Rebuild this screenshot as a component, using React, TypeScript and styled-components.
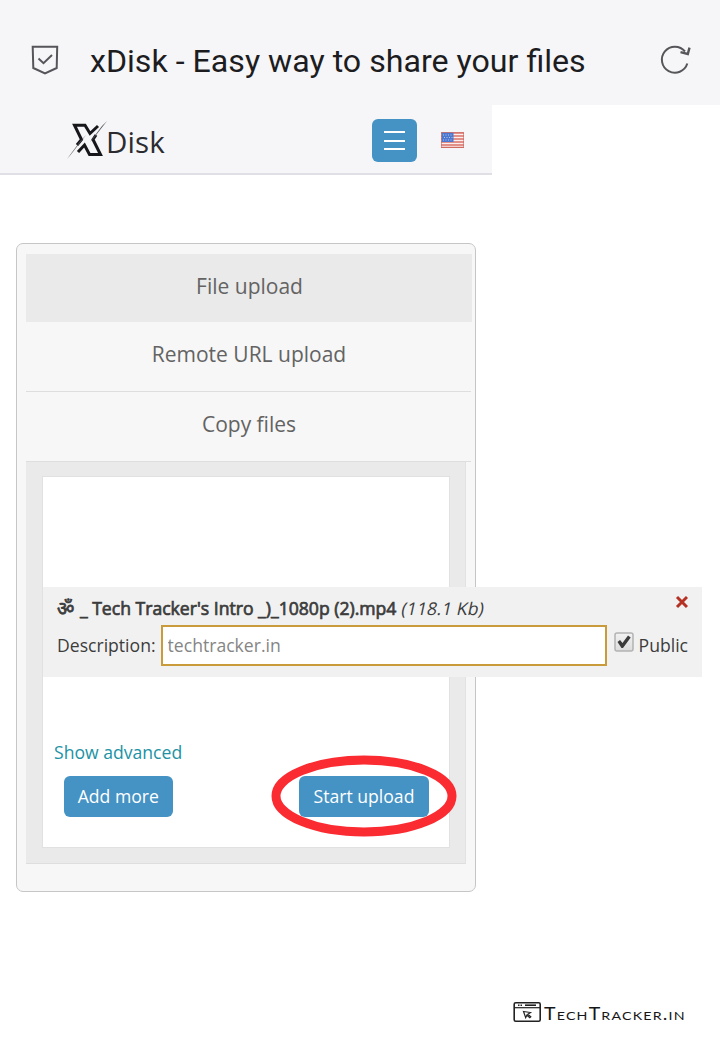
import React from "react";
import styled, { createGlobalStyle } from "styled-components";

const GlobalStyle = createGlobalStyle`
  * { box-sizing: border-box; }
  body { margin: 0; background: #fff; font-family: "Open Sans", "Noto Sans", sans-serif; }
`;

const Page = styled.div`
  width: 720px;
  height: 1045px;
  display: flex;
  flex-direction: column;
  overflow: hidden;
  background: #fff;
`;

const TitleBar = styled.header`
  height: 105px;
  flex: none;
  display: flex;
  align-items: center;
  padding: 15px 27px 0 30px;
  background: #f6f6f9;
`;

const PageTitle = styled.h1`
  flex: 1;
  margin: 2px 0 0 30px;
  font: 400 32.15px/40px Roboto, sans-serif;
  white-space: nowrap;
  color: #1d1d1f;
`;

const SiteNav = styled.nav`
  width: 492px;
  height: 70px;
  flex: none;
  display: flex;
  align-items: center;
  padding: 2px 28px 0 66px;
  border-bottom: 2px solid #dfdfe5;
  background: #f6f6f9;
`;

const Logo = styled.div`
  display: flex;
  align-items: center;
  flex: 1;
  height: 42px;
`;

const LogoText = styled.span`
  margin: 3px 0 0 -3px;
  font: 400 29.5px/36px "Open Sans", sans-serif;
  letter-spacing: 0.1px;
  color: #2c2c30;
`;

const MenuButton = styled.button`
  width: 45px;
  height: 43.5px;
  margin: 1px 24px 0 0;
  padding: 0;
  border: 0;
  border-radius: 6px;
  background: #4592c4;
  display: flex;
  flex-direction: column;
  align-items: center;
  justify-content: center;
  gap: 6.5px;
`;

const MenuLine = styled.span`
  width: 21px;
  height: 2px;
  background: #fff;
`;

const Panel = styled.main`
  width: 460.5px;
  height: 649px;
  flex: none;
  margin: 68px 0 0 15.5px;
  padding: 10px 3px 0 9.5px;
  border: 1.5px solid #c6c6c8;
  border-radius: 7px;
  background: #f7f7f7;
`;

const Tab = styled.div<{ $active?: boolean; $height: number }>`
  width: ${(p) => (p.$active ? 446 : 445)}px;
  height: ${(p) => p.$height}px;
  display: flex;
  align-items: center;
  justify-content: center;
  padding: 0 0 5px 1px;
  border-bottom: ${(p) => (p.$active ? "0" : "1px solid #dedede")};
  background: ${(p) => (p.$active ? "#eaeaea" : "transparent")};
  font-size: 21px;
  color: #636363;
`;

const UploadFrame = styled.section`
  width: 440px;
  height: 402px;
  padding: 14px 16px;
  border-bottom: 1px solid #dedede;
  border-right: 1px solid #e2e2e2;
  background: #eaeaea;
`;

const UploadArea = styled.div`
  width: 408px;
  height: 372px;
  padding-top: 110px;
  border: 1px solid #e1e1e1;
  background: #fff;
  position: relative;
`;

const FileCard = styled.div`
  width: 659px;
  height: 90px;
  padding: 8px 14px 0;
  background: #f1f1f1;
  color: #3c3c3c;
  font-size: 17.6px;
`;

const FileHead = styled.div`
  display: flex;
  justify-content: space-between;
  height: 30px;
  line-height: 26px;
  white-space: nowrap;
`;

const FileName = styled.span`
  -webkit-text-stroke: 0.7px #3c3c3c;
`;

const Om = styled.span`
  font-size: 19px;
  line-height: 20px;
  margin-right: 1px;
`;

const FileSize = styled.span`
  display: inline-block;
  margin-left: 1px;
  letter-spacing: 0.1px;
  transform: skewX(-12deg);
`;

const FieldRow = styled.label`
  display: flex;
  height: 41px;
  align-items: center;
`;

const FieldText = styled.span`
  margin-bottom: 2px;
`;

const DescriptionInput = styled.input`
  width: 446px;
  height: 41px;
  margin-left: 5px;
  padding: 0 5px 2px;
  border: 2px solid #c99b3b;
  outline: 0;
  background: #fff;
  font: 400 17.6px "Open Sans", sans-serif;
  &::placeholder { color: #858585; opacity: 1; }
`;

const CheckSlot = styled.span`
  display: flex;
  margin: 0 5px 8px 7px;
`;

const AdvancedLink = styled.a`
  display: block;
  margin: 62px 0 0 11px;
  font-size: 17.6px;
  line-height: 26px;
  color: #2192a5;
`;

const Actions = styled.div`
  display: flex;
  justify-content: space-between;
  margin-top: 11px;
  padding: 0 20px 0 20.5px;
`;

const ActionButton = styled.button<{ $width: number }>`
  width: ${(p) => p.$width}px;
  height: 41px;
  padding: 0 0 1px;
  border: 0;
  border-radius: 6px;
  background: #4592c4;
  color: #fff;
  font: 400 17.6px "Open Sans", sans-serif;
  white-space: nowrap;
`;

const Highlight = styled.svg`
  position: absolute;
  left: 228px;
  top: 277px;
  pointer-events: none;
`;

const Watermark = styled.footer`
  display: flex;
  align-items: center;
  margin: 108px 0 0 513px;
  height: 24px;
  font: 400 16.5px/24px Lato, sans-serif;
  font-variant: small-caps;
  letter-spacing: 1px;
  color: #171717;
`;

const WatermarkText = styled.span`
  margin: 4px 0 0 2px;
  white-space: nowrap;
  transform: scaleX(1.185);
  transform-origin: left;
`;

const ShieldIcon = () => (
  <svg width="30" height="32" viewBox="0 0 30 32" fill="none" stroke="#56565a" strokeWidth="2">
    <path d="M2.7 2.8H27.2L26.7 24L15 29.5L3.3 24Z" />
    <path d="M8.5 14.5L13.5 19.2L22 11" />
  </svg>
);

const ReloadIcon = () => (
  <svg width="34" height="34" viewBox="0 0 34 34" fill="none" stroke="#56565a" strokeWidth="2">
    <path d="M28.3 20.5A13 13 0 1 1 26 8.5" />
    <path d="M21.5 9.2L28.8 11L30.5 4.6" strokeWidth="2.4" />
  </svg>
);

const XMark = () => (
  <svg width="43" height="42" viewBox="0 0 43 42" fill="none">
    <path d="M32 7L24 14.5L19 6.2H8.5L15.5 20.5L11 26" stroke="#17171b" strokeWidth="3" />
    <path d="M12 33L18.5 26L23.5 35.5H34.5L27 20.5L30 16" stroke="#17171b" strokeWidth="3" />
    <path d="M1 40L14 22.5L20 16L4.5 36Z" fill="#55555a" />
    <path d="M41 2L27 20L24 23L36 7Z" fill="#55555a" />
  </svg>
);

const Flag = () => (
  <svg width="23" height="16" viewBox="0 0 23 16">
    <rect width="23" height="16" fill="#fbefed" />
    <path d="M0 1H23M0 4H23M0 7H23M0 10H23M0 13H23M0 15.5H23" stroke="#d97269" strokeWidth="1.4" />
    <rect x=".5" y=".5" width="12" height="9.5" fill="#4d77cf" />
    <path d="M2 3H12M3 5.5H12M2 8H12" stroke="#b3c9f1" strokeWidth="1" strokeDasharray="1 1.5" />
    <rect x=".5" y=".5" width="22" height="15" fill="none" stroke="#c7685f" strokeOpacity=".6" />
  </svg>
);

const RemoveIcon = () => (
  <svg width="13" height="14" viewBox="0 0 13 14">
    <path d="M2 2L12 12M12 2L2 12" stroke="#b53124" strokeWidth="3" />
  </svg>
);

const CheckIcon = () => (
  <svg width="20" height="20" viewBox="0 0 20 20">
    <defs>
      <linearGradient id="box" x2="0" y2="1">
        <stop stopColor="#f2f2f2" />
        <stop offset="1" stopColor="#dcdcdc" />
      </linearGradient>
    </defs>
    <rect x="1" y="1" width="18" height="18" rx="2" fill="url(#box)" stroke="#b3b3b3" strokeWidth="1.5" />
    <path d="M3.5 10L6 8L8.5 11L14 3.5L16.7 5.5L9 16H7.5Z" fill="#3b3b3b" />
  </svg>
);

const BrowserIcon = () => (
  <svg width="29" height="22" viewBox="0 0 29 22" fill="none" stroke="#222" strokeWidth="1.6">
    <rect x="1.2" y="1.7" width="26" height="18.5" rx="1.5" />
    <path d="M1 6.7H27" strokeWidth="1.2" />
    <path d="M5 4.2H10" strokeDasharray="1.5 1" />
    <path d="M12 4.2H23" />
    <path d="M10.5 10.5L17.5 11.5L14.8 13.3L17.8 15.7L16.8 16.7L13.8 14.2L12.7 16.7Z" strokeWidth="1.2" />
  </svg>
);

const CloseSlot = styled.span`
  display: flex;
  align-items: flex-start;
`;

export default function App() {
  return (
    <Page>
      <GlobalStyle />
      <TitleBar>
        <ShieldIcon />
        <PageTitle>xDisk - Easy way to share your files</PageTitle>
        <ReloadIcon />
      </TitleBar>
      <SiteNav>
        <Logo>
          <XMark />
          <LogoText>Disk</LogoText>
        </Logo>
        <MenuButton aria-label="Menu">
          <MenuLine />
          <MenuLine />
          <MenuLine />
        </MenuButton>
        <Flag />
      </SiteNav>
      <Panel>
        <Tab $active $height={68}>File upload</Tab>
        <Tab $height={70}>Remote URL upload</Tab>
        <Tab $height={70}>Copy files</Tab>
        <UploadFrame>
          <UploadArea>
            <FileCard>
              <FileHead>
                <span>
                  <FileName><Om>ॐ</Om> _ Tech Tracker's Intro _)_1080p (2).mp4</FileName>{" "}
                  <FileSize>(118.1 Kb)</FileSize>
                </span>
                <CloseSlot>
                  <RemoveIcon />
                </CloseSlot>
              </FileHead>
              <FieldRow>
                <FieldText>Description:</FieldText>
                <DescriptionInput placeholder="techtracker.in" />
                <CheckSlot>
                  <CheckIcon />
                </CheckSlot>
                <FieldText>Public</FieldText>
              </FieldRow>
            </FileCard>
            <AdvancedLink>Show advanced</AdvancedLink>
            <Actions>
              <ActionButton $width={109.5}>Add more</ActionButton>
              <ActionButton $width={130}>Start upload</ActionButton>
            </Actions>
            <Highlight width="188" height="84" viewBox="0 0 188 84" fill="none">
              <ellipse cx="93" cy="42" rx="88" ry="36" stroke="#fb2b32" strokeWidth="9" />
            </Highlight>
          </UploadArea>
        </UploadFrame>
      </Panel>
      <Watermark>
        <BrowserIcon />
        <WatermarkText>TechTracker.in</WatermarkText>
      </Watermark>
    </Page>
  );
}
